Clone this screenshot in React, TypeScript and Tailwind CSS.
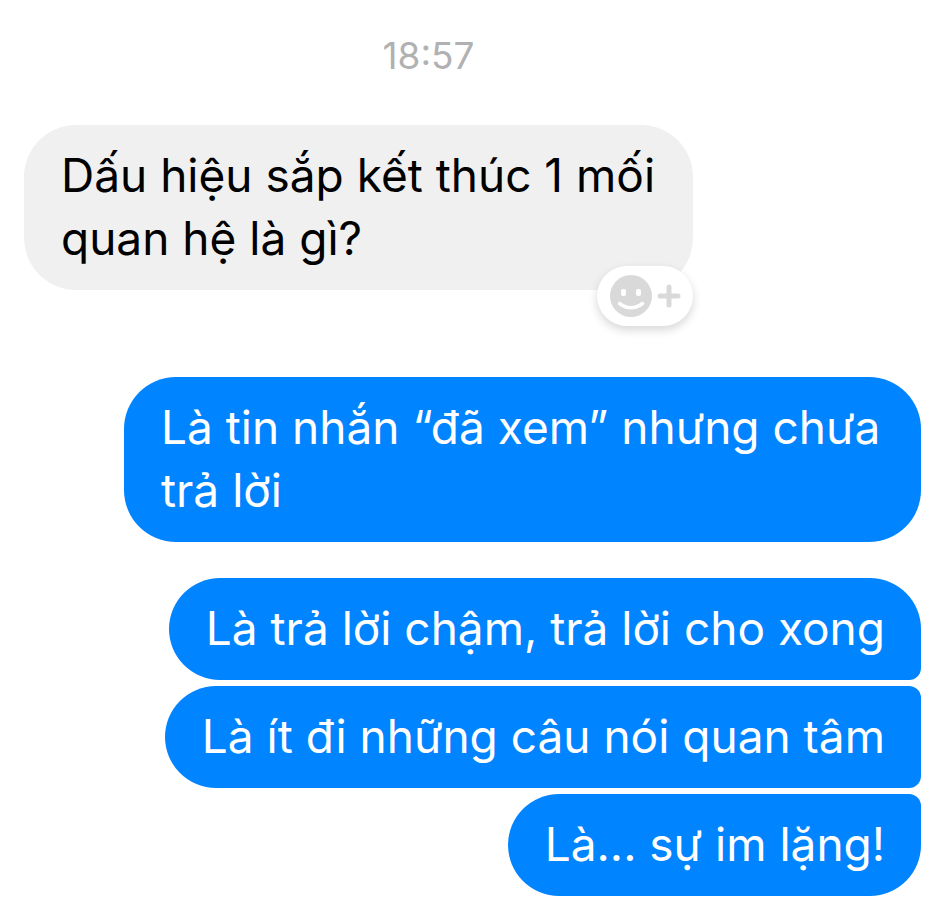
import type { ReactNode } from "react";

function Sent({ shape, children }: { shape: string; children: ReactNode }) {
  return (
    <p className={`bg-[#0084ff] pt-[19px] pr-9 pb-5 pl-[37px] text-[46px] leading-[63px] text-white ${shape}`}>
      {children}
    </p>
  );
}

export default function App() {
  return (
    <main className="flex min-h-screen flex-col bg-white pr-[5px] pl-6 font-['Inter','Liberation_Sans',sans-serif]">
      <time className="mt-8 pr-[88px] text-center text-[37px] leading-[48px] text-[#b1b1b1]">18:57</time>

      <section className="relative mt-[45px] w-[669px] max-w-full rounded-[52px] bg-[#f0f0f0] pt-[19px] pb-5 pl-[37px]">
        <p className="text-[46px] leading-[63px] text-black">
          Dấu hiệu sắp kết thúc 1 mối
          <br />
          quan hệ là gì?
        </p>
        <button
          type="button"
          aria-label="Add reaction"
          className="absolute right-0 -bottom-9 flex h-[60px] w-24 items-center justify-center gap-[5px] rounded-full bg-white shadow-[0_4px_10px_rgba(0,0,0,0.16)]"
        >
          <svg className="size-[42px]" viewBox="0 0 42 42" aria-hidden="true">
            <circle cx="21" cy="21" r="21" fill="#d9d9d9" />
            <rect x="11" y="14" width="5" height="7" rx="2" fill="white" />
            <rect x="26" y="14" width="5" height="7" rx="2" fill="white" />
            <path d="M9.5 28.5Q21 37 32.5 28.5" fill="none" stroke="white" strokeWidth="3.5" strokeLinecap="round" />
          </svg>
          <svg className="size-6" viewBox="0 0 24 24" aria-hidden="true">
            <path d="M12 3v18M3 12h18" stroke="#d9d9d9" strokeWidth="5" strokeLinecap="round" />
          </svg>
        </button>
      </section>

      <section className="mt-[87px] flex flex-col items-end">
        <Sent shape="w-[797px] max-w-full rounded-[52px]">
          Là tin nhắn “đã xem” nhưng chưa
          <br />
          trả lời
        </Sent>
        <div className="mt-9 flex flex-col items-end gap-[6px]">
          <Sent shape="rounded-[51px] rounded-br-xl">Là trả lời chậm, trả lời cho xong</Sent>
          <Sent shape="rounded-[51px] rounded-r-xl">Là ít đi những câu nói quan tâm</Sent>
          <Sent shape="rounded-[51px] rounded-tr-xl">Là... sự im lặng!</Sent>
        </div>
      </section>
    </main>
  );
}
